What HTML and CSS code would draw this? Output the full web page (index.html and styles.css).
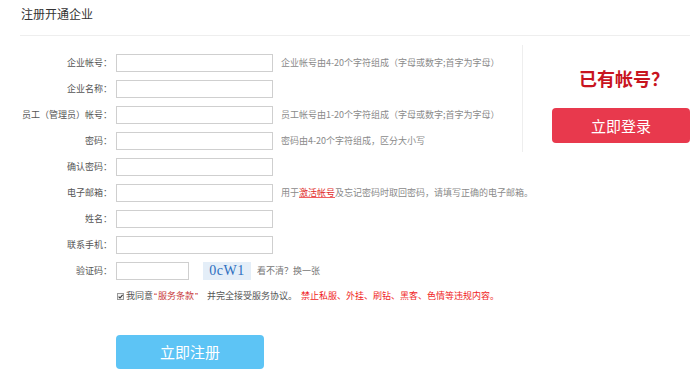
FILE: index.html
```html
<!DOCTYPE html>
<html lang="zh-CN">
<head>
<meta charset="utf-8">
<title>注册开通企业</title>
<link rel="stylesheet" href="styles.css">
</head>
<body>
<div class="page">
  <div class="head"><h1 class="head-title">注册开通企业</h1></div>
  <div class="main">
    <form class="form">
      <div class="row"><label class="lbl">企业帐号：</label><input class="ipt" type="text"><span class="tip">企业帐号由4-20个字符组成（字母或数字;首字为字母）</span></div>
      <div class="row"><label class="lbl">企业名称：</label><input class="ipt" type="text"></div>
      <div class="row"><label class="lbl">员工（管理员）帐号：</label><input class="ipt" type="text"><span class="tip">员工帐号由1-20个字符组成（字母或数字;首字为字母）</span></div>
      <div class="row"><label class="lbl">密码：</label><input class="ipt" type="password"><span class="tip">密码由4-20个字符组成，区分大小写</span></div>
      <div class="row"><label class="lbl">确认密码：</label><input class="ipt" type="password"></div>
      <div class="row"><label class="lbl">电子邮箱：</label><input class="ipt" type="text"><span class="tip">用于<span class="tip-hl">激活帐号</span>及忘记密码时取回密码，请填写正确的电子邮箱。</span></div>
      <div class="row"><label class="lbl">姓名：</label><input class="ipt" type="text"></div>
      <div class="row"><label class="lbl">联系手机：</label><input class="ipt" type="text"></div>
      <div class="row"><label class="lbl">验证码：</label><input class="ipt ipt-code" type="text"><span class="captcha">0cW1</span><a class="refresh">看不清？换一张</a></div>
      <div class="agree">
        <span class="chk"><svg width="7" height="7" viewBox="0 0 7 7"><rect x="0.5" y="0.5" width="6" height="6" fill="#f4f4f4" stroke="#999"/><path d="M1.6 3.6 L3 5 L5.6 1.8" fill="none" stroke="#333" stroke-width="1.1"/></svg></span>
        <span class="agree-txt">我同意<span class="agree-link"><span class="q">“</span>服务条款<span class="q">”</span></span>并完全接受服务协议。</span>
        <span class="agree-warn">禁止私服、外挂、刷钻、黑客、色情等违规内容。</span>
      </div>
      <div class="submit-row"><button type="button" class="btn-reg">立即注册</button></div>
    </form>
    <div class="side">
      <div class="side-title">已有帐号？</div>
      <a class="btn-login">立即登录</a>
    </div>
  </div>
</div>
</body>
</html>
```

FILE: styles.css
```css
* { box-sizing: border-box; }
html, body { margin: 0; padding: 0; background: #fff; }
body {
  font-family: "Noto Sans CJK SC", "Noto Sans", sans-serif;
  color: #555;
  width: 700px;
  height: 381px;
  overflow: hidden;
}
.head {
  margin: 0 10px 0 20px;
  height: 36px;
  border-bottom: 1px solid #eeeeee;
  padding: 6px 0 0 1px;
}
.head-title {
  margin: 0;
  font-size: 12px;
  line-height: 16px;
  font-weight: normal;
  color: #333;
}
.main {
  display: flex;
  align-items: flex-start;
}
.form {
  width: 522px;
  margin: 0;
  padding-top: 18px;
  display: flex;
  flex-direction: column;
}
.row {
  display: flex;
  align-items: center;
  height: 18px;
  margin-bottom: 8px;
}
.lbl {
  width: 112px;
  flex: none;
  text-align: right;
  font-size: 9px;
  line-height: 18px;
  color: #555;
  white-space: nowrap;
}
.ipt {
  margin: 0 0 0 4px;
  width: 157px;
  height: 18px;
  border: 1px solid #cfcfcf;
  padding: 0 4px;
  font-size: 9px;
  outline: none;
  flex: none;
}
.ipt-code { width: 73px; }
.tip {
  margin-left: 8px;
  font-size: 9px;
  line-height: 18px;
  color: #8a8a8a;
  white-space: nowrap;
}
.tip-hl {
  color: #e02b2b;
  text-decoration: underline;
  text-decoration-color: #f06060;
}
.captcha {
  margin-left: 14px;
  width: 48px;
  height: 18px;
  background: #e4eef8;
  color: #2d6fbf;
  font-family: "Liberation Serif", "DejaVu Serif", serif;
  font-size: 14px;
  line-height: 18px;
  text-align: center;
  letter-spacing: 0.5px;
}
.refresh {
  margin-left: 6px;
  font-size: 9px;
  line-height: 18px;
  color: #777;
  cursor: pointer;
}
.agree {
  display: flex;
  align-items: center;
  height: 12px;
  margin-top: 2px;
  padding-left: 117px;
  font-size: 9px;
  line-height: 12px;
  white-space: nowrap;
}
.chk { width: 7px; height: 7px; display: flex; }
.agree-txt { margin-left: 2px; color: #555; }
.agree-link { color: #c83a3a; margin-right: 8px; }
.q { font-family: "Liberation Sans", sans-serif; padding: 0 1px; }
.agree-warn { margin-left: 4px; color: #f01e1e; }
.submit-row {
  padding-left: 116px;
  margin-top: 33px;
}
.btn-reg {
  width: 148px;
  height: 34px;
  border: 0;
  border-radius: 4px;
  background: #5dc4f5;
  color: #fff;
  font-family: "Noto Sans CJK SC", sans-serif;
  font-size: 15px;
  line-height: 34px;
  padding: 0;
}
.side {
  margin-top: 9px;
  height: 107px;
  border-left: 1px solid #eeeeee;
  padding: 21px 0 0 29px;
  display: flex;
  flex-direction: column;
  align-items: flex-start;
}
.side-title {
  width: 138px;
  text-align: center;
  font-size: 18px;
  line-height: 24px;
  font-weight: bold;
  color: #c8141e;
  padding-left: 6px;
}
.btn-login {
  margin-top: 18px;
  width: 138px;
  height: 35px;
  border-radius: 4px;
  background: #e8394d;
  color: #fff;
  font-size: 15px;
  line-height: 35px;
  text-align: center;
  cursor: pointer;
}
```
